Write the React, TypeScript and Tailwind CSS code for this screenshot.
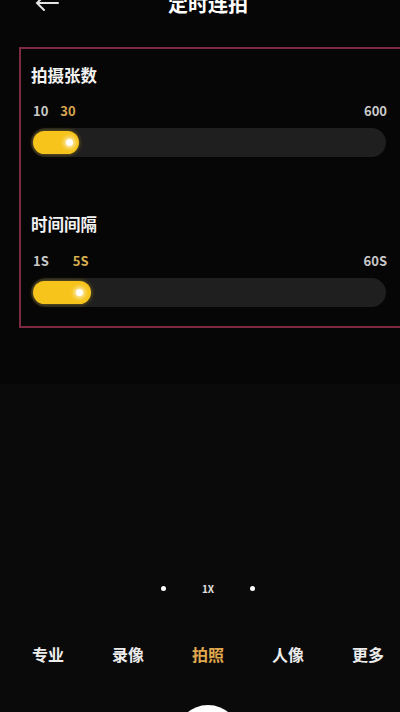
import React from 'react'

const font = { fontFamily: '"Noto Sans CJK SC", "Noto Sans", sans-serif' }

function Slider({ fill, dot }: { fill: number; dot: number }) {
  return (
    <div className="relative mt-[9px] h-[29px] w-[355px] rounded-full bg-[#1f1f1f]">
      <div
        className="absolute left-[2px] top-[3px] h-[23px] rounded-full bg-[#f7c41b] shadow-[0_0_4px_rgba(247,196,27,0.5)]"
        style={{ width: fill }}
      >
        <div
          className="absolute top-[8px] h-[7px] w-[7px] rounded-full bg-white shadow-[0_0_4px_2px_rgba(255,255,255,0.7)]"
          style={{ left: dot }}
        />
      </div>
    </div>
  )
}

export default function App() {
  return (
    <main
      className="h-[712px] w-[400px] overflow-hidden bg-[#0b0a0a] text-white"
      style={font}
    >
      <div className="bg-[#070606] pb-[56px]">
        {/* header, partly off the top edge */}
        <div className="relative -mt-[8px] flex h-[24px] items-center justify-center pl-[16px]">
          <svg
            className="absolute left-[34px] top-[4px]"
            width="26"
            height="16"
            viewBox="0 0 26 16"
            fill="none"
            stroke="#e5e5e5"
            strokeWidth="2"
            strokeLinecap="round"
          >
            <path d="M24 7H3M10 0L3 7l7 7" />
          </svg>
          <span className="text-[20px] font-bold leading-[24px]">定时连拍</span>
        </div>

        <div className="ml-[19px] mt-[31px] w-[400px] border-2 border-[#7c2a42] pb-[19px] pl-[10px] pt-[15px]">
          <div className="h-[22px] text-[16.5px] font-bold leading-[22px] text-[#f2f2f2]">拍摄张数</div>
          <div className="mt-[17px] flex h-[16px] w-[356px] items-center text-[13px] font-semibold leading-[16px]">
            <span className="ml-[2px] text-[#c9c9c9]">10</span>
            <span className="ml-[12px] text-[#d8a44f]">30</span>
            <span className="ml-auto text-[#c9c9c9]">600</span>
          </div>
          <Slider fill={46} dot={33} />

          <div className="mt-[56px] h-[22px] text-[16.5px] font-bold leading-[22px] text-[#f2f2f2]">时间间隔</div>
          <div className="mt-[18px] flex h-[16px] w-[356px] items-center text-[13px] font-semibold leading-[16px]">
            <span className="ml-[2px] text-[#c9c9c9]">1S</span>
            <span className="ml-[24px] text-[#d8b04f]">5S</span>
            <span className="ml-auto text-[#c9c9c9]">60S</span>
          </div>
          <Slider fill={58} dot={43} />
        </div>
      </div>

      <div className="mt-[194px] flex h-[20px] items-center justify-center pl-[16px]">
        <span className="h-[5px] w-[5px] rounded-full bg-white" />
        <span className="mx-[36px] text-[10px] font-semibold text-[#e0e0e0]">1X</span>
        <span className="h-[5px] w-[5px] rounded-full bg-white" />
      </div>

      <div className="mt-[45px] grid h-[22px] grid-cols-[repeat(5,80px)] pl-[8px] text-[16px] font-bold leading-[22px]">
        <span className="text-center text-[#ededed]">专业</span>
        <span className="text-center text-[#ededed]">录像</span>
        <span className="text-center text-[#e0a94e]">拍照</span>
        <span className="text-center text-[#ededed]">人像</span>
        <span className="text-center text-[#ededed]">更多</span>
      </div>

      <div className="mx-auto mt-[40px] h-[64px] w-[64px] translate-x-[8px] rounded-full bg-white" />
    </main>
  )
}
